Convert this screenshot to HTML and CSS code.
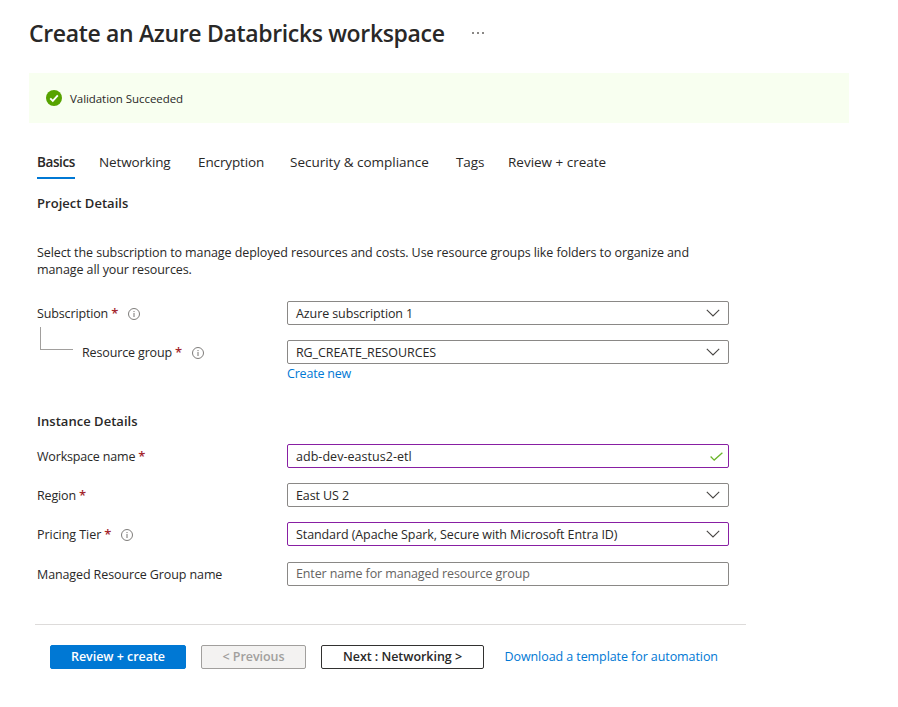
FILE: index.html
```html
<!DOCTYPE html>
<html lang="en">
<head>
<meta charset="utf-8">
<title>Create an Azure Databricks workspace</title>
<link rel="stylesheet" href="styles.css">
</head>
<body>
<svg class="defs" width="0" height="0">
  <symbol id="chevron" viewBox="0 0 14 8"><path d="M.8.8 7 7 13.2.8" fill="none" stroke="#484644" stroke-width="1.1"/></symbol>
  <symbol id="info" viewBox="0 0 12 12"><circle cx="6" cy="6" r="5.5" fill="none" stroke="#777573" stroke-width=".95"/><path d="M6 5v4" stroke="#777573" stroke-width="1"/><path d="M6 3v1.1" stroke="#777573" stroke-width="1"/></symbol>
</svg>
<header class="title-bar">
  <h1>Create an Azure Databricks workspace</h1>
  <span class="more"><i></i><i></i><i></i></span>
</header>
<div class="banner">
  <svg width="16" height="16" viewBox="0 0 16 16"><circle cx="8" cy="8" r="8" fill="#57a300"/><path d="m4.2 8.3 2.6 2.6 5-5.6" fill="none" stroke="#fff" stroke-width="1.8"/></svg>
  <span>Validation Succeeded</span>
</div>
<main>
  <nav class="tabs">
    <a class="active">Basics</a><a>Networking</a><a>Encryption</a><a class="wide">Security &amp; compliance</a><a>Tags</a><a class="wide">Review + create</a>
  </nav>
  <h2 class="project">Project Details</h2>
  <p class="intro">Select the subscription to manage deployed resources and costs. Use resource groups like folders to organize and<br>manage all your resources.</p>
  <section class="fields">
    <div class="row">
      <label>Subscription <b>*</b><svg class="info"><use href="#info"/></svg></label>
      <div class="box wider">Azure subscription 1<svg class="chevron"><use href="#chevron"/></svg></div>
    </div>
    <div class="row">
      <label><span class="elbow"></span>Resource group <b>*</b><svg class="info"><use href="#info"/></svg></label>
      <div class="box">RG_CREATE_RESOURCES<svg class="chevron"><use href="#chevron"/></svg></div>
    </div>
    <a class="create">Create new</a>
  </section>
  <h2 class="instance">Instance Details</h2>
  <section class="fields">
    <div class="row">
      <label class="tight">Workspace name <b>*</b></label>
      <div class="box edited name">adb-dev-eastus2-etl<svg class="check" viewBox="0 0 13 9"><path d="m.6 4.5 3.6 3.6L12.4.7" fill="none" stroke="#6bb52b" stroke-width="1.3"/></svg></div>
    </div>
    <div class="row">
      <label>Region <b>*</b></label>
      <div class="box">East US 2<svg class="chevron"><use href="#chevron"/></svg></div>
    </div>
    <div class="row">
      <label class="pricing">Pricing Tier <b>*</b><svg class="info"><use href="#info"/></svg></label>
      <div class="box edited">Standard (Apache Spark, Secure with Microsoft Entra ID)<svg class="chevron"><use href="#chevron"/></svg></div>
    </div>
    <div class="row last">
      <label class="managed">Managed Resource Group name</label>
      <div class="box placeholder">Enter name for managed resource group</div>
    </div>
  </section>
</main>
<footer>
  <button class="primary">Review + create</button>
  <button class="previous" disabled>&lt; Previous</button>
  <button class="next">Next : Networking &gt;</button>
  <a>Download a template for automation</a>
</footer>
</body>
</html>
```
FILE: styles.css
```css
* { box-sizing: border-box; }
body { margin: 0; background: #fff; color: #292827; font: 12.5px/17px "Open Sans", sans-serif; letter-spacing: -.09px; }
.defs { display: block; }
h1, h2, p { margin: 0; }
h1 { font-size: 23px; line-height: 32px; font-weight: 600; letter-spacing: -.34px; white-space: nowrap; }
h2 { font-size: 13px; line-height: 18px; font-weight: 600; letter-spacing: .03px; }
.title-bar { display: flex; align-items: center; height: 73px; padding: 0 0 8px 29px; }
.more { display: flex; gap: 3px; margin-left: 27px; }
.more i { width: 2px; height: 2px; background: #8a8886; }
.banner { display: flex; align-items: center; gap: 8px; width: 820px; height: 50px; margin-left: 29px; padding-left: 17px; background: #f8fff0; font-size: 11.5px; letter-spacing: -.06px; }
main { padding-left: 37px; }
.tabs { display: grid; grid-template-columns: 62px 99px 92px 166px 52px auto; justify-items: start; margin-top: 27px; height: 29px; font-size: 13.5px; letter-spacing: -.12px; white-space: nowrap; }
.tabs a { height: 29px; line-height: 24px; }
.tabs .wide { letter-spacing: -.01px; }
.tabs .active { width: 38px; font-weight: 600; letter-spacing: -.4px; border-bottom: 2px solid #0078d4; }
.project { margin-top: 15px; }
.intro { margin-top: 32px; white-space: nowrap; }
.fields { display: flex; flex-direction: column; gap: 15px; }
.intro + .fields { margin-top: 23px; }
.row { display: grid; grid-template-columns: 250px 442px; height: 24px; }
label { display: flex; align-items: center; letter-spacing: -.14px; white-space: nowrap; }
label b { margin-left: 3px; color: #a4262c; font-weight: 600; font-size: 13px; }
.tight { letter-spacing: -.18px; }
.pricing { letter-spacing: -.05px; }
.managed { letter-spacing: -.11px; }
.info { width: 12px; height: 12px; margin: 2px 0 0 10px; }
.elbow { align-self: flex-start; width: 33px; height: 23px; margin: -13px 9px 0 3px; border: solid #a19f9d; border-width: 0 0 1px 1px; }
.box { display: flex; align-items: center; justify-content: space-between; height: 24px; padding: 0 8px; border: 1px solid #8a8886; border-radius: 2px; white-space: nowrap; }
.wider { letter-spacing: -.1px; }
.name { padding-right: 5px; letter-spacing: .04px; }
.edited { border-color: #881fa3; }
.placeholder { padding-bottom: 2px; color: #666462; letter-spacing: -.12px; }
.chevron { width: 14px; height: 8px; }
.check { width: 13px; height: 9px; }
.last { margin-top: 1px; }
.create { margin: -14px 0 0 250px; color: #0078d4; letter-spacing: -.2px; }
.instance { margin: 30px 0 14px; }
footer { display: flex; align-items: center; width: 711px; height: 65px; margin: 38px 0 0 35px; padding-left: 15px; border-top: 1px solid #dddbda; }
footer button { height: 24px; margin-right: 15px; padding: 0 0 2px; border: 1px solid #323130; border-radius: 2px; background: #fff; color: #292827; font: 600 12.5px/17px "Open Sans", sans-serif; letter-spacing: -.04px; }
footer .primary { width: 136px; border-color: #0078d4; background: #0078d4; color: #fff; }
footer .previous { width: 105px; border-color: #a19f9d; background: #f3f2f1; color: #a19f9d; }
footer .next { width: 163px; margin-right: 20.5px; }
footer a { padding-bottom: 2px; color: #0078d4; letter-spacing: -.08px; }
```
